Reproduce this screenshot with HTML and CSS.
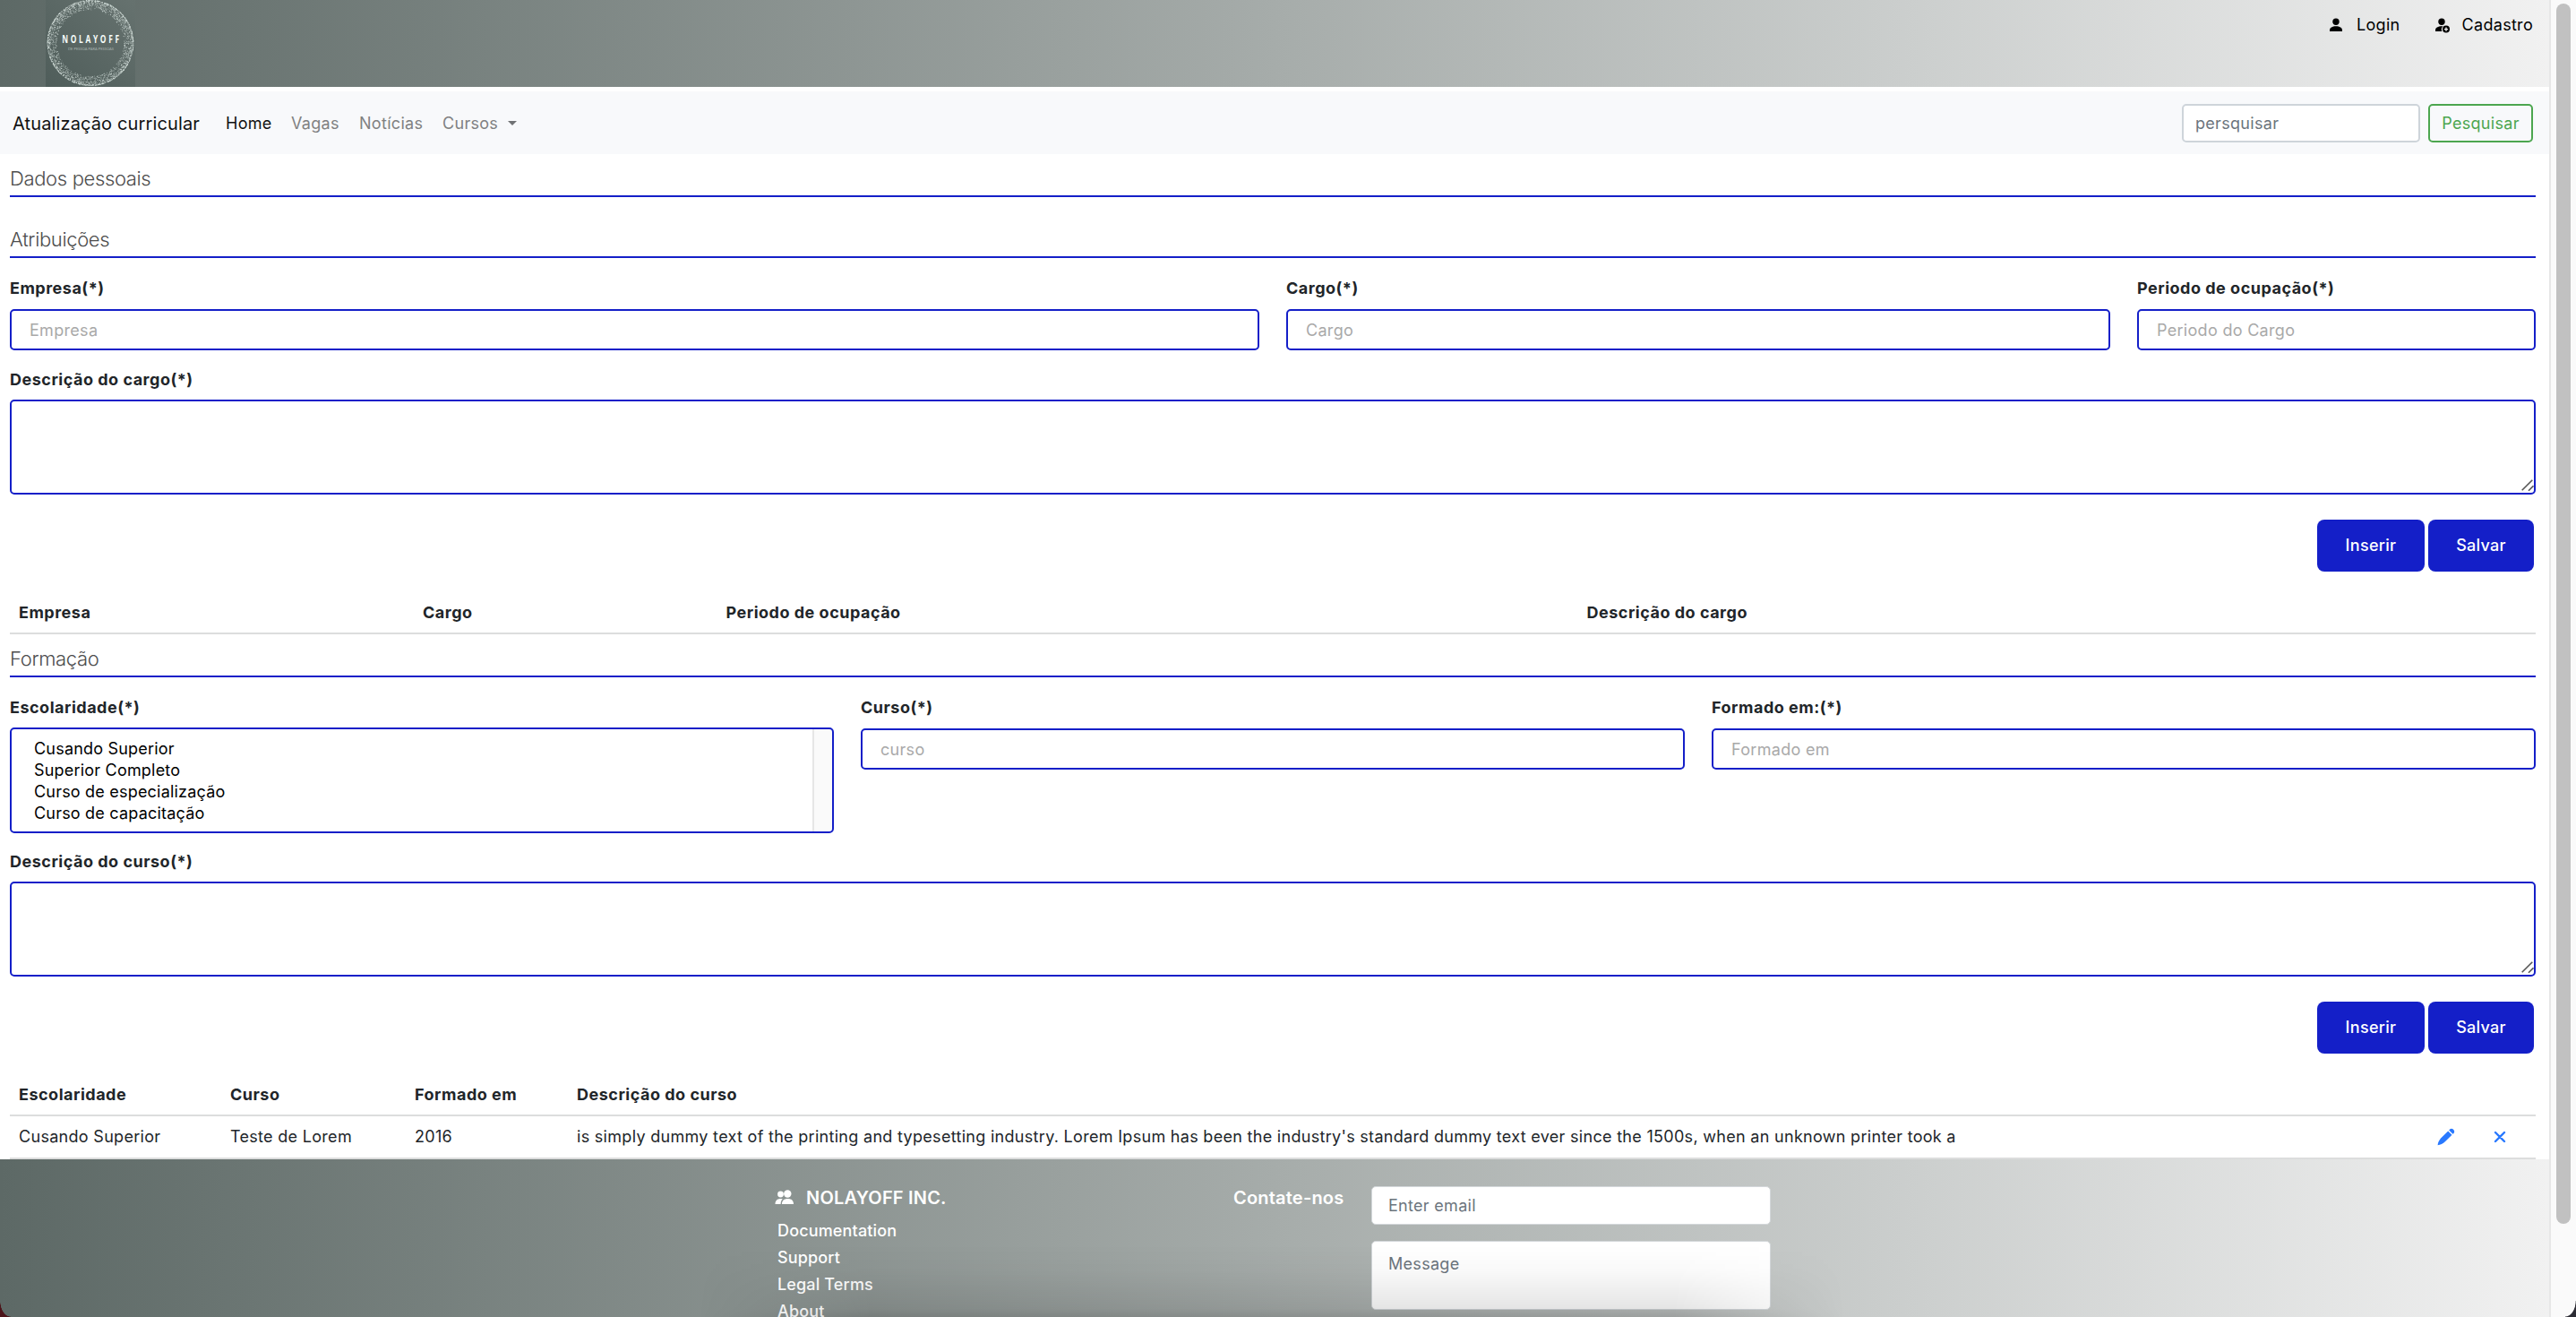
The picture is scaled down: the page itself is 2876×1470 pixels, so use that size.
FILE: index.html
```html
<!DOCTYPE html>
<html lang="pt-BR">
<head>
<meta charset="utf-8">
<title>Atualização curricular</title>
<link rel="stylesheet" href="styles.css">
</head>
<body>
<div class="page">
<header class="top">
  <svg class="logo" viewBox="0 0 100 97" preserveAspectRatio="none">
    <defs><linearGradient id="lg" x1="0" y1="1" x2="1" y2="0"><stop offset="0" stop-color="#4f5d5a"/><stop offset="1" stop-color="#66726f"/></linearGradient></defs>
    <rect width="100" height="97" fill="url(#lg)"/>
    <g id="dots" fill="#e3eeea"></g>
    <text transform="translate(18.300 48) scale(.7 1)" class="logo-name" textLength="91">NOLAYOFF</text>
    <text x="25" y="56" class="logo-tag" textLength="51">DE PESSOA PARA PESSOAS</text>
  </svg>
  <nav class="account">
    <a><svg width="16" height="16" viewBox="0 0 16 16"><circle cx="8" cy="4.2" r="3.7"/><path d="M1 15v-1.200c0-3 3-4.600 7-4.600s7 1.600 7 4.600V15z"/></svg><span>Login</span></a>
    <a><svg class="wide" width="18" height="18" viewBox="0 0 18 18"><circle cx="8" cy="4.200" r="3.700"/><path d="M1 15v-1.200c0-3 3-4.600 7-4.600l1.500.1A5 5 0 0 0 8.300 15z"/><path fill-rule="evenodd" d="M13 8.600a4 4 0 1 0 0 8 4 4 0 0 0 0-8zM12.300 10.500h1.400v1.400h1.400v1.400h-1.400v1.400h-1.400v-1.400h-1.400v-1.400h1.400z"/></svg><span>Cadastro</span></a>
  </nav>
</header>
<nav class="bar">
  <span class="brand">Atualização curricular</span>
  <a class="active">Home</a><a class="vagas">Vagas</a><a class="noticias">Notícias</a><a class="cursos">Cursos <i class="caret"></i></a>
  <form class="search"><input placeholder="persquisar"><button type="button">Pesquisar</button></form>
</nav>
<main>
  <h2>Dados pessoais</h2>
  <h2 class="h-attr">Atribuições</h2>
  <section class="row job">
    <label>Empresa(*)<input placeholder="Empresa"></label>
    <label>Cargo(*)<input placeholder="Cargo"></label>
    <label>Periodo de ocupação(*)<input placeholder="Periodo do Cargo"></label>
  </section>
  <label class="desc">Descrição do cargo(*)
    <span class="area"><textarea></textarea><svg class="grip" width="14" height="14" viewBox="0 0 14 14"><path d="M.7 12.300 12.300.7M8 12.800 13.500 7.300"/></svg></span></label>
  <div class="actions"><button type="button">Inserir</button><button type="button">Salvar</button></div>
  <div class="thead jobs"><b>Empresa</b><b>Cargo</b><b>Periodo de ocupação</b><b>Descrição do cargo</b></div>
  <h2>Formação</h2>
  <section class="row edu">
    <label>Escolaridade(*)
      <span class="list"><span>Cusando Superior</span><span>Superior Completo</span><span>Curso de especialização</span><span>Curso de capacitação</span></span></label>
    <label>Curso(*)<input placeholder="curso"></label>
    <label>Formado em:(*)<input placeholder="Formado em"></label>
  </section>
  <label class="desc second">Descrição do curso(*)
    <span class="area"><textarea></textarea><svg class="grip" width="14" height="14" viewBox="0 0 14 14"><path d="M.7 12.300 12.300.7M8 12.800 13.500 7.300"/></svg></span></label>
  <div class="actions"><button type="button">Inserir</button><button type="button">Salvar</button></div>
  <div class="thead courses"><b>Escolaridade</b><b>Curso</b><b>Formado em</b><b>Descrição do curso</b></div>
  <div class="trow courses"><span>Cusando Superior</span><span>Teste de Lorem</span><span>2016</span><span>is simply dummy text of the printing and typesetting industry. Lorem Ipsum has been the industry's standard dummy text ever since the 1500s, when an unknown printer took a</span>
    <span class="icon"><svg width="20" height="20" viewBox="0 0 20 20"><path d="M12.200 3.400l4.300 4.300-7.400 7.400C6.500 17.700 3.500 19 .6 19.200.8 16.200 2.200 13.300 4.800 10.800zM13.200 2.400l.9-.9c1-1 2.700-1 3.800.1l.4.400c1.100 1.100 1.200 2.800.2 3.900l-1 .9z"/></svg></span>
    <span class="icon"><svg width="14" height="14" viewBox="0 0 14 14"><path class="cross" d="M2 2l10 10M12 2L2 12"/></svg></span></div>
</main>
<footer>
  <div class="company">
    <h3><svg width="22" height="18" viewBox="0 0 22 18"><circle cx="6.500" cy="5" r="3.400"/><circle cx="14.300" cy="4.500" r="4.200"/><path d="M.5 16c0-3.900 2.300-6 6-6l2.300.3C7.100 11.700 6.700 13.500 6.600 16zM8 16c0-3.900 2.300-6 6.500-6s6.500 2.100 6.500 6z"/></svg>NOLAYOFF INC.</h3>
    <a>Documentation</a><a>Support</a><a>Legal Terms</a><a>About</a>
  </div>
  <h3 class="contact">Contate-nos</h3>
  <form class="mail"><input placeholder="Enter email"><textarea placeholder="Message"></textarea></form>
</footer>
</div>
<aside class="scroll"><i></i></aside>
<div class="shade"></div>
<i class="corner left"></i><i class="corner right"></i>
<script src="logo.js"></script>
</body>
</html>
```

FILE: styles.css
```css
* { box-sizing: border-box; }
html, body { margin: 0; width: 2876px; height: 1470px; overflow: hidden; background: #fff; }
body { position: relative; display: flex; font: 18px/26px Inter, "Liberation Sans", sans-serif; letter-spacing: .3px; color: #212529; }
input, textarea, button { font: inherit; letter-spacing: inherit; display: block; margin: 0; outline: 0; }
textarea { resize: none; }
.page { width: 2846px; height: 1470px; overflow: hidden; flex: none; }
.top { height: 97px; margin-bottom: 5px; background: linear-gradient(90deg, #5d6966, #a6acaa 50%, #f1f1f1); display: flex; justify-content: space-between; }
.logo { width: 100px; height: 97px; margin-left: 51px; }
.logo-name { font: 700 12px "Open Sans", sans-serif; letter-spacing: 0; fill: #f4fbf8; }
.logo-tag { font: 400 4px Lato, sans-serif; letter-spacing: 0; fill: #a9b5b1; }
.account { display: flex; gap: 38px; padding: 15px 18px 0 0; color: #000; height: 41px; }
.account a { display: flex; }
.account svg { margin: 5px 15px 0 0; }
.account .wide { margin-right: 13px; }
.bar { height: 70px; background: #f8f9fb; display: flex; align-items: center; padding: 1px 18px 0 14px; color: #808182; }
.bar a { white-space: nowrap; }
.brand { font-size: 20px; letter-spacing: .13px; width: 238px; color: #111; white-space: nowrap; }
.bar .active { color: #111; width: 73px; }
.vagas { width: 76px; }
.noticias { width: 93px; }
.caret { display: inline-block; border: 5px solid transparent; border-top-color: #707274; border-bottom: 0; margin-left: 5px; vertical-align: 4px; }
.search { display: flex; gap: 9px; margin-left: auto; }
.search input { width: 266px; height: 43px; border: 2px solid #ced4da; border-radius: 5px; padding: 0 13px; }
.search button { width: 117px; height: 43px; border: 2px solid #4ca64f; border-radius: 5px; background: none; color: #4ca64f; padding: 0; }
::placeholder { color: #6c757d; opacity: 1; }
main { padding: 0 15px 0 11px; }
main ::placeholder { color: #a9a9a9; }
h2 { margin: 0; height: 48px; border-bottom: 2px solid #141fc8; font: 300 22px/54px Inter, sans-serif; letter-spacing: -.35px; color: #4d4d4d; }
.h-attr { margin-top: 20px; }
.row { display: grid; column-gap: 30px; padding-top: 21px; }
.job { grid-template-columns: 1395px 920px 445px; height: 103px; }
.edu { grid-template-columns: 920px 920px 920px; }
label { font-weight: 700; display: block; line-height: 26px; letter-spacing: .5px; }
b { letter-spacing: .5px; }
label input { margin-top: 10px; width: 100%; height: 46px; border: 2px solid #141fc8; border-radius: 5px; padding: 0 20px; font-weight: 400; letter-spacing: .3px; }
.desc { margin-top: 20px; }
.area { position: relative; display: block; margin-top: 9px; }
.area textarea { width: 100%; height: 106px; border: 2px solid #141fc8; border-radius: 5px; }
.grip { position: absolute; right: 2px; bottom: 3px; fill: none; stroke: #555; stroke-width: 1.600; }
.actions { display: flex; justify-content: flex-end; gap: 4px; padding: 28px 2px 0 0; }
.actions button { width: 120px; height: 58px; border: 0; border-radius: 8px; background: #141fc8; color: #fff; font-weight: 500; padding: 0; }
.actions button + button { width: 118px; }
.thead, .trow { display: grid; padding-left: 10px; border-bottom: 2px solid #dcdddd; white-space: nowrap; }
.thead { margin-top: 22px; height: 48px; line-height: 48px; }
.trow { height: 48px; line-height: 46px; }
.jobs { grid-template-columns: 451px 338.500px 961px 1fr; }
.courses { grid-template-columns: 236px 206px 181px 2077px 63px 1fr; }
.icon { display: flex; align-items: center; fill: #2979ff; }
.cross { stroke: #2979ff; stroke-width: 2.400; stroke-linecap: round; }
.list { display: block; height: 118px; margin-top: 9px; border: 2px solid #141fc8; border-radius: 5px; padding: 10px 25px; font-weight: 400; letter-spacing: .2px; color: #000; background: linear-gradient(#fafafa, #fafafa) right / 20px 100% no-repeat, linear-gradient(#e6e6e6, #e6e6e6) right / 22px 100% no-repeat; }
.list span { display: block; line-height: 24px; }
.second { margin-top: 19px; }
footer { height: 176px; background: linear-gradient(90deg, #5d6966, #a6acaa 50%, #f1f1f1); display: flex; color: #fff; font-weight: 500; padding-left: 865px; }
.company { width: 512px; padding-top: 27px; }
h3 { font: 600 20px/32px Inter, sans-serif; letter-spacing: .2px; margin: 0; display: flex; align-items: center; }
h3 svg { margin-right: 13px; fill: #fff; }
.company a { display: block; padding-left: 3px; height: 30px; line-height: 30px; letter-spacing: .15px; }
.company h3 { margin-bottom: 6px; }
.contact { width: 154px; height: 86px; }
.mail { padding-top: 30px; }
.mail input, .mail textarea { width: 446px; border: 1px solid #d3d7da; border-radius: 5px; padding: 0 18px; height: 43px; font-weight: 400; }
.mail textarea { height: 77px; margin-top: 18px; padding-top: 12px; }
.scroll { width: 30px; height: 1470px; background: #fafafa; border-left: 2px solid #e7e7e7; padding: 4px 0 0 6px; }
.scroll i { display: block; width: 16px; height: 1362px; border-radius: 8px; background: #c1c1c1; }
.shade { position: absolute; left: 780px; bottom: 0; width: 1280px; height: 80px; background: linear-gradient(transparent, rgba(0,0,0,.025) 35%, rgba(0,0,0,.1) 88%, rgba(0,0,0,.17)); -webkit-mask-image: linear-gradient(90deg, transparent, #000 15%, #000 85%, transparent); mask-image: linear-gradient(90deg, transparent, #000 15%, #000 85%, transparent); }
.corner { position: absolute; bottom: 0; width: 12px; height: 18px; }
.left { left: 0; background: radial-gradient(ellipse 12px 18px at 100% 0, transparent 96%, #4c1319 100%); }
.right { right: 0; background: radial-gradient(ellipse 12px 18px at 0 0, transparent 94%, #2c2c34 100%); }
```

FILE: logo.js
```js
// Scatter the speckled ring of the logo with a fixed seed.
let seed = 7;
const rnd = () => (seed = (seed * 16807) % 2147483647) / 2147483647;
let dots = "";
for (let i = 0; i < 2600; i++) {
  const a = rnd() * Math.PI * 2;
  const k = 1 - Math.pow(rnd(), 2.2) * 0.22;
  const x = 50 + Math.cos(a) * 48 * k;
  const y = 48 + Math.sin(a) * 47.6 * k;
  dots += `<circle cx="${x.toFixed(1)}" cy="${y.toFixed(1)}" r=".48" opacity="${(0.35 + rnd() * 0.6).toFixed(2)}"/>`;
}
document.getElementById("dots").innerHTML = dots;
```
